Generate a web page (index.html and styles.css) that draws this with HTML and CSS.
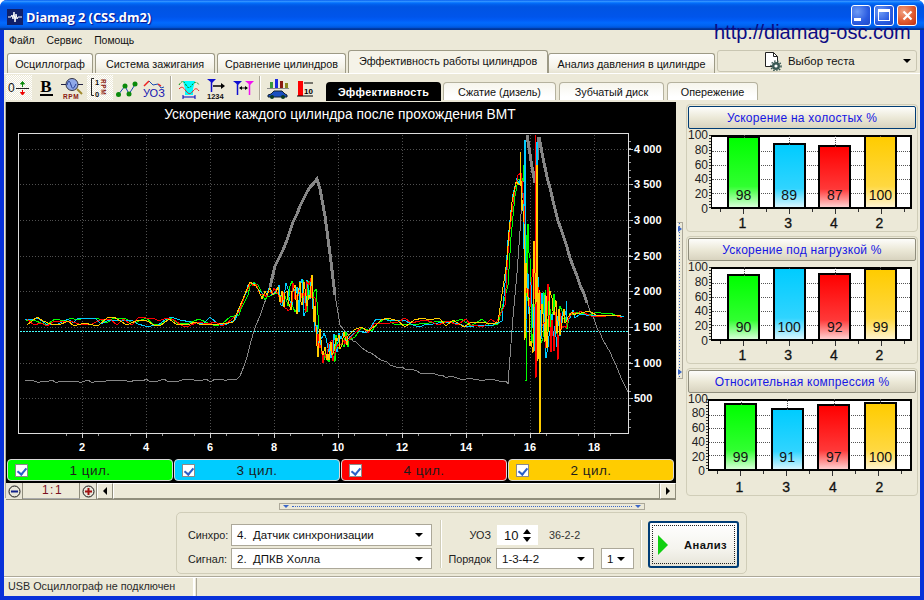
FILE: index.html
```html
<!DOCTYPE HTML>
<html lang="ru">
<head>
<meta charset="UTF-8">
<title>Diamag 2 (CSS.dm2)</title>
<link rel="stylesheet" href="styles.css">
</head>
<body>
<div class="window">

  <div class="titlebar">
    <svg class="appicon" width="16" height="16" viewBox="0 0 16 16"><rect width="16" height="16" fill="#10206a"/><path d="M1 8h3l1-2 1 4 1-7 1 10 1-8 1 5 1-2h4" fill="none" stroke="#fff"/></svg>
    <span class="apptitle">Diamag 2 (CSS.dm2)</span>
    <div class="winbtns">
      <div class="winbtn"><span class="g-min"></span></div>
      <div class="winbtn"><span class="g-max"></span></div>
      <div class="winbtn close"><svg width="11" height="11" viewBox="0 0 11 11"><path d="M1.5 1.5l8 8M9.5 1.5l-8 8" stroke="#fff" stroke-width="2.2"/></svg></div>
    </div>
  </div>
  <div class="siteurl">http://diamag-osc.com</div>

  <div class="menubar">
    <span>Файл</span>
    <span>Сервис</span>
    <span>Помощь</span>
  </div>

  <div class="tabrow">
    <div class="tab">Осциллограф</div>
    <div class="tab">Система зажигания</div>
    <div class="tab">Сравнение цилиндров</div>
    <div class="tab on">Эффективность работы цилиндров</div>
    <div class="tab">Анализ давления в цилиндре</div>
    <div class="testbtn">
      <svg width="20" height="20" viewBox="0 0 20 20"><path d="M2.5 1.5h8l4 4v10h-12z" fill="#fff" stroke="#222"/><path d="M10.5 1.5v4h4" fill="none" stroke="#222"/><circle cx="13" cy="15" r="4" fill="#3a5a55"/><circle cx="13" cy="15" r="5" fill="none" stroke="#3a5a55" stroke-dasharray="1.5 1.5" stroke-width="1.5"/><circle cx="13" cy="15" r="1.6" fill="#fff"/></svg>
      <span>Выбор теста</span>
      <i class="arrow"></i>
    </div>
  </div>

  <div class="toolbar">
    <div class="tbtn checked"><svg width="24" height="24" viewBox="0 0 24 24"><text x="1" y="16" class="ic-num">0</text><path d="M9 12.5h13" stroke="#222"/><path d="M15.5 11V7M13.5 8l2-2.500 2 2.500z" stroke="#0a8a0a" fill="#0a8a0a"/><path d="M15.5 14v4M13.5 16.5l2 2.500 2-2.500z" stroke="#e00" fill="#e00"/></svg></div>
    <div class="tbtn"><svg width="24" height="24" viewBox="0 0 24 24"><text x="12" y="16" class="ic-b">B</text><path d="M6 19h13" stroke="#000" stroke-width="2"/></svg></div>
    <div class="tbtn"><svg width="24" height="24" viewBox="0 0 24 24"><circle cx="11" cy="8.500" r="6" fill="#8fa8e8" stroke="#334"/><path d="M0 8.500h5M17 8.500h5" stroke="#224"/><path d="M6 9c1.500-5 2.500-5 4 0s2.500 4 5-1" fill="none" stroke="#223a90"/><path d="M16 13l5 5" stroke="#a08a30" stroke-width="2"/><text x="2" y="23" class="ic-rpm">RPM</text></svg></div>
    <div class="tbtn checked"><svg width="24" height="24" viewBox="0 0 24 24"><path d="M6 2.500h-2.500v17h2.500" fill="none" stroke="#222"/><text x="7" y="9" class="ic-tiny">1</text><text x="7" y="21" class="ic-tiny">0</text><text transform="translate(13 3) rotate(90)" class="ic-rpm2">RPM</text></svg></div>
    <div class="tbtn"><svg width="24" height="24" viewBox="0 0 24 24"><path d="M3 19l7-9 4 8 7-11" fill="none" stroke="#1a4ab0"/><g fill="#0a8a0a"><circle cx="3.500" cy="18.500" r="2.500"/><circle cx="10" cy="10" r="2.500"/><circle cx="14" cy="18" r="2.500"/><circle cx="20" cy="8" r="2.500"/></g></svg></div>
    <div class="tbtn"><svg width="24" height="24" viewBox="0 0 24 24"><path d="M2 10l5-5 4 4 5-1 3 4 3-1" fill="none" stroke="#1a4ab0"/><path d="M2 10l5-5M16 8l3 2" fill="none" stroke="#e22" stroke-width="1.500"/><text x="1" y="21" class="ic-uoz">УОЗ</text></svg></div>
    <div class="tsep"></div>
    <div class="tbtn"><svg width="24" height="24" viewBox="0 0 24 24"><path d="M6 5h12l-2 8v6h-8v-6z" fill="#0ff"/><path d="M2 9c3-5 5-4 7 0s4 3 6 0 5-4 7 0" fill="none" stroke="#0a8a0a" stroke-dasharray="2 1"/><path d="M2 13c3-3 4-2 7 2s5 3 7 0 4-3 6 0" fill="none" stroke="#e22"/><path d="M6 21h12M6 19v4M18 19v4" stroke="#0000c0"/></svg></div>
    <div class="tbtn"><svg width="24" height="24" viewBox="0 0 24 24"><path d="M3 3h9l-4 4z" fill="#1010d0"/><path d="M7.500 5v11" stroke="#1010d0" stroke-width="1.500"/><path d="M9 10h10" stroke="#000" stroke-width="1.500"/><path d="M17 7l4 3-4 3z"/><text x="3" y="23" class="ic-tiny">1234</text></svg></div>
    <div class="tbtn"><svg width="24" height="24" viewBox="0 0 24 24"><path d="M2 5h9l-4 4z" fill="#1010d0"/><path d="M6.500 7v12" stroke="#1010d0" stroke-width="1.500"/><path d="M14 5h9l-4 4z" fill="#f010f0"/><path d="M18.500 7v12" stroke="#f010f0" stroke-width="1.500"/><path d="M9 12h7" stroke="#000"/><path d="M11 10l-3 2 3 2zM14 10l3 2-3 2z"/></svg></div>
    <div class="tsep"></div>
    <div class="tbtn"><svg width="24" height="24" viewBox="0 0 24 24"><path d="M4 6h3v6h-3z" fill="#3a9a3a"/><path d="M9 3h3v9h-3z" fill="#1a2ae0"/><path d="M14 5h3v7h-3z" fill="#8a1a10"/><path d="M19 7h3v5h-3z" fill="#8a8a20"/><path d="M1 12.500h22" stroke="#888"/><path d="M2 19l3-1 3-3h8l3 3 2 1v2h-19z" fill="#1a50c0" stroke="#123"/><circle cx="6" cy="21" r="2" fill="#0a3a20"/><circle cx="17" cy="21" r="2" fill="#0a3a20"/></svg></div>
    <div class="tbtn"><svg width="24" height="24" viewBox="0 0 24 24"><path d="M5 5h5v15h-5z" fill="#f00"/><path d="M11 7h9M4 20h16" stroke="#000"/><text x="11" y="18" class="ic-ten">10</text></svg></div>

    <div class="subtabs">
      <div class="subtab on">Эффективность</div>
      <div class="subtab">Сжатие (дизель)</div>
      <div class="subtab">Зубчатый диск</div>
      <div class="subtab">Опережение</div>
    </div>
  </div>

  <div class="work">
    <div class="scope">
      <svg class="scopeplot" width="668" height="357" viewBox="6 102 668 357">
        <text x="340" y="119" class="plottitle">Ускорение каждого цилиндра после прохождения ВМТ</text>
        <g id="grid"></g>
        <g id="traces"></g>
        <g class="ylab">
          <text x="634" y="153">4 000</text>
          <text x="634" y="188">3 500</text>
          <text x="634" y="224">3 000</text>
          <text x="634" y="260">2 500</text>
          <text x="634" y="295">2 000</text>
          <text x="634" y="331">1 500</text>
          <text x="634" y="367">1 000</text>
          <text x="634" y="402">500</text>
        </g>
        <g class="xlab">
          <text x="82" y="451">2</text>
          <text x="146" y="451">4</text>
          <text x="210" y="451">6</text>
          <text x="274" y="451">8</text>
          <text x="338" y="451">10</text>
          <text x="402" y="451">12</text>
          <text x="466" y="451">14</text>
          <text x="530" y="451">16</text>
          <text x="594" y="451">18</text>
        </g>
      </svg>
      <div class="chips">
        <label class="chip green"><i class="check"></i><span>1 цил.</span></label>
        <label class="chip cyan"><i class="check"></i><span>3 цил.</span></label>
        <label class="chip red"><i class="check"></i><span>4 цил.</span></label>
        <label class="chip amber"><i class="check"></i><span>2 цил.</span></label>
      </div>
      <div class="zoombar">
        <div class="zbtn"><svg width="13" height="13" viewBox="0 0 13 13"><circle cx="6.500" cy="6.500" r="5.500" fill="#e8e6da" stroke="#111"/><path d="M3 6.500h7" stroke="#10208a" stroke-width="2"/></svg></div>
        <div class="zoomval">1:1</div>
        <div class="zbtn"><svg width="13" height="13" viewBox="0 0 13 13"><circle cx="6.500" cy="6.500" r="5.500" fill="#e8e6da" stroke="#111"/><path d="M3 6.500h7M6.500 3v7" stroke="#a01010" stroke-width="2"/></svg></div>
        <div class="scrollbtn"><i class="tri-l"></i></div>
        <div class="scrollthumb"></div>
        <div class="scrollbtn"><i class="tri-r"></i></div>
      </div>
    </div>

    <div class="vsplit"><div class="vgrip"><i class="grip-t"></i><i class="grip-b"></i></div></div>

    <div class="side">
      <div class="group">
        <div class="ghead focus">Ускорение на холостых %</div>
        <div class="chart">
          <div class="yaxis"><span>100</span><span>80</span><span>60</span><span>40</span><span>20</span><span>0</span></div>
          <div class="plot">
            <div class="gridrows"><b></b><b></b><b></b><b></b><b></b></div>
            <div class="bars">
              <div class="bar green" style="height:98%"><span>98</span></div>
              <div class="bar cyan" style="height:89%"><span>89</span></div>
              <div class="bar red" style="height:87%"><span>87</span></div>
              <div class="bar amber" style="height:100%"><span>100</span></div>
            </div>
          </div>
        </div>
        <div class="xaxis"><span>1</span><span>3</span><span>4</span><span>2</span></div>
      </div>

      <div class="group">
        <div class="ghead">Ускорение под нагрузкой %</div>
        <div class="chart">
          <div class="yaxis"><span>100</span><span>80</span><span>60</span><span>40</span><span>20</span><span>0</span></div>
          <div class="plot">
            <div class="gridrows"><b></b><b></b><b></b><b></b><b></b></div>
            <div class="bars">
              <div class="bar green" style="height:90%"><span>90</span></div>
              <div class="bar cyan" style="height:100%"><span>100</span></div>
              <div class="bar red" style="height:92%"><span>92</span></div>
              <div class="bar amber" style="height:99%"><span>99</span></div>
            </div>
          </div>
        </div>
        <div class="xaxis"><span>1</span><span>3</span><span>4</span><span>2</span></div>
      </div>

      <div class="group wide">
        <div class="ghead">Относительная компрессия %</div>
        <div class="chart">
          <div class="yaxis"><span>100</span><span>80</span><span>60</span><span>40</span><span>20</span><span>0</span></div>
          <div class="plot">
            <div class="gridrows"><b></b><b></b><b></b><b></b><b></b></div>
            <div class="bars">
              <div class="bar green" style="height:99%"><span>99</span></div>
              <div class="bar cyan" style="height:91%"><span>91</span></div>
              <div class="bar red" style="height:97%"><span>97</span></div>
              <div class="bar amber" style="height:100%"><span>100</span></div>
            </div>
          </div>
        </div>
        <div class="xaxis"><span>1</span><span>3</span><span>4</span><span>2</span></div>
      </div>
    </div>
  </div>

  <div class="lower">
    <div class="hgrip"><i class="grip-l"></i><i class="grip-line"></i><i class="grip-l"></i></div>
    <div class="panel">
      <div class="pcol first">
        <div class="prow"><label>Синхро:</label><div class="combo wide1"><span>4.&nbsp; Датчик синхронизации</span><i class="arrow"></i></div></div>
        <div class="prow"><label>Сигнал:</label><div class="combo wide1"><span>2.&nbsp; ДПКВ Холла</span><i class="arrow"></i></div></div>
      </div>
      <div class="psep"></div>
      <div class="pcol second">
        <div class="prow">
          <label class="rt">УОЗ</label>
          <div class="spin"><span>10</span><div class="spinarrows"><i class="up"></i><i class="down"></i></div></div>
          <span class="gear">36-2-2</span>
        </div>
        <div class="prow">
          <label class="rt">Порядок</label>
          <div class="combo order"><span>1-3-4-2</span><i class="arrow"></i></div>
          <div class="combo first-cyl"><span>1</span><i class="arrow"></i></div>
        </div>
      </div>
      <div class="psep two"></div>
      <div class="runbtn"><div class="runinner"><i class="play"></i><span>Анализ</span></div></div>
    </div>
  </div>

  <div class="statusbar">
    <div class="stcell">USB Осциллограф не подключен</div>
    <div class="stcell rest"></div>
  </div>
</div>
<script src="chart.js"></script>
</body>
</html>
```

FILE: styles.css
```css
* { margin: 0; padding: 0; box-sizing: border-box; }
html, body { width: 924px; height: 600px; overflow: hidden; background: #fff; }
body {
  font-family: "Liberation Sans", Arial, sans-serif;
  font-size: 10.8px;
  color: #111;
}
i { display: block; font-style: normal; }

.window {
  position: relative;
  width: 924px;
  height: 600px;
  display: flex;
  flex-direction: column;
  background: #ece9d8;
  border: solid #0831d9;
  border-width: 0 4px 4px;
  border-radius: 7px 7px 0 0;
}

/* title bar */
.titlebar {
  flex: none;
  height: 30px;
  margin: 0 -4px;
  padding: 3px 7px 0 7px;
  display: flex;
  align-items: center;
  border-radius: 7px 7px 0 0;
  background: linear-gradient(#0058ee 0%, #3593ff 4%, #288eff 6%, #127dff 8%, #036ffc 10%, #0262ee 14%, #0057e5 20%, #0054e3 24%, #0055eb 56%, #005bf5 66%, #026afe 76%, #0062ef 86%, #0052d6 92%, #0040ab 94%, #003092 100%);
}
.appicon { flex: none; margin-right: 3px; }
.apptitle {
  font-family: "Open Sans", "Liberation Sans", sans-serif;
  font-weight: 700;
  font-size: 12.8px;
  color: #fff;
  text-shadow: 1px 1px 1px #0f1089;
}
.winbtns { margin-left: auto; margin-top: -3px; display: flex; gap: 3px; }
.winbtn {
  width: 20px;
  height: 21px;
  border: 1px solid #fff;
  border-radius: 3px;
  background: radial-gradient(circle at 30% 30%, #6f9cf5, #2a5be0 60%, #2048c8);
  display: flex;
  align-items: center;
  justify-content: center;
  position: relative;
}
.winbtn.close { background: radial-gradient(circle at 30% 30%, #f0a080, #e05a30 55%, #c03010); }
.g-min { width: 7px; height: 3px; background: #fff; margin: 9px 8px 0 0; }
.g-max { width: 12px; height: 12px; border: 1px solid #fff; border-top-width: 3px; }

.siteurl {
  position: absolute;
  top: 21px;
  left: 710px;
  font-size: 20px;
  color: #0c0c84;
  white-space: nowrap;
}

/* menu */
.menubar {
  flex: none;
  height: 20px;
  display: flex;
  align-items: center;
  gap: 12px;
  padding-left: 5px;
  font-size: 10.4px;
}

/* main tabs */
.tabrow {
  flex: none;
  height: 24px;
  display: grid;
  grid-template-columns: 88px 122px 131px 200px 169px 200px;
  padding-left: 3px;
  align-items: end;
  border-bottom: 1px solid #fff;
}
.tab {
  height: 20px;
  margin-right: 2px;
  display: flex;
  align-items: center;
  justify-content: center;
  white-space: nowrap;
  background: linear-gradient(#fff, #f4f2e8 70%, #e6e3d2);
  border: 1px solid #9d9a86;
  border-bottom: 0;
  border-radius: 3px 3px 0 0;
}
.tab.on { height: 23px; margin: 0; background: #f5f3e8; padding-bottom: 2px; }
.testbtn {
  height: 22px;
  margin-bottom: 1px;
  display: flex;
  align-items: center;
  padding-left: 45px;
  gap: 5px;
  border: 1px solid #c9c6b2;
  border-radius: 3px;
  background: #ece9d8;
  font-size: 11.4px;
}
.testbtn .arrow { margin-left: auto; margin-right: 5px; }
.arrow {
  width: 0;
  height: 0;
  border-left: 4px solid transparent;
  border-right: 4px solid transparent;
  border-top: 4px solid #000;
}

/* toolbar + sub tabs */
.toolbar {
  flex: none;
  height: 27px;
  display: flex;
  align-items: center;
  padding-left: 2px;
  gap: 1px;
}
.tbtn { width: 26px; height: 25px; display: flex; align-items: center; justify-content: center; flex: none; }
.tbtn.checked { background: repeating-conic-gradient(#fff 0 25%, #ece9d8 0 50%) 0 0 / 2px 2px; }
.tsep { width: 2px; height: 24px; margin: 0 3px 0 2px; background: #aca899; border-right: 1px solid #fff; flex: none; }
.ic-num { font-size: 12px; fill: #111; }
.ic-b { font: bold 17px "Liberation Serif", serif; text-anchor: middle; fill: #000; }
.ic-rpm { font: bold 6.5px "Liberation Sans", sans-serif; fill: #8a1a10; letter-spacing: .6px; }
.ic-rpm2 { font: bold 6.5px "Liberation Sans", sans-serif; fill: #8a1a10; letter-spacing: .6px; }
.ic-tiny { font: bold 7.5px "Liberation Sans", sans-serif; fill: #111; }
.ic-uoz { font: 11px "Liberation Sans", sans-serif; fill: #1414b0; }
.ic-ten { font: bold 8px "Liberation Sans", sans-serif; fill: #000; }

.subtabs {
  margin-left: 7px;
  align-self: flex-end;
  display: grid;
  grid-template-columns: 117px 116px 108px 94px;
}
.subtab {
  height: 18px;
  margin-right: 3px;
  display: flex;
  align-items: center;
  justify-content: center;
  border: 1px solid #b5b29e;
  border-bottom: 0;
  border-radius: 4px 4px 0 0;
  background: linear-gradient(#f6f5ec, #fff 80%);
}
.subtab.on {
  height: 19px;
  margin-right: 2px;
  background: #000;
  color: #fff;
  font-weight: 700;
  border: 0;
  letter-spacing: .3px;
}

/* work area */
.work { flex: none; height: 399px; display: flex; }
.scope {
  flex: none;
  width: 671px;
  margin: 1px 0 2px 1px;
  display: flex;
  flex-direction: column;
  background: #000;
  border: 1px solid #aca899;
  border-width: 0 0 1px 1px;
}
.scopeplot { display: block; flex: none; }
.plottitle { font-size: 13.8px; fill: #fff; text-anchor: middle; }
.ylab text { font-size: 11px; font-weight: 700; fill: #fff; }
.xlab text { font-size: 11px; font-weight: 700; fill: #fff; text-anchor: middle; }

.chips {
  flex: none;
  height: 24px;
  display: grid;
  grid-template-columns: repeat(4, 166px);
  gap: 1px;
  padding: 0 0 2px 1px;
}
.chip {
  display: flex;
  align-items: center;
  border: 1px solid #d8d8d8;
  border-radius: 4px;
  padding-left: 7px;
  font-size: 13.5px;
  letter-spacing: .5px;
  color: #1c1c1c;
}
.chip span { flex: 1; text-align: center; padding-right: 20px; }
.chip.green { background: #00ff00; }
.chip.cyan { background: #00ccff; }
.chip.red { background: #ff0000; }
.chip.amber { background: #ffcc00; }
.check {
  flex: none;
  width: 13px;
  height: 13px;
  border: 1px solid #8a8a8a;
  background: #fff;
  position: relative;
}
.check::after {
  content: "";
  position: absolute;
  left: 3px;
  top: 1px;
  width: 4px;
  height: 7px;
  border: solid #2a5fc8;
  border-width: 0 2px 2px 0;
  transform: rotate(40deg);
}

.zoombar {
  flex: 1;
  display: flex;
  align-items: stretch;
  background: #ece9d8;
  border-bottom: 1px solid #8f8d7c;
}
.zbtn { flex: none; width: 17px; display: flex; align-items: center; justify-content: center; background: #e8e5d6; border-right: 1px solid #8f8d7c; }
.zoomval { flex: none; width: 57px; padding-left: 3px; text-align: center; color: #7a1020; font-size: 12px; letter-spacing: 1.5px; line-height: 15px; border-right: 1px solid #8f8d7c; border-bottom: 1px solid #aaa; }
.scrollbtn { flex: none; width: 16px; display: flex; align-items: center; justify-content: center; background: #ece9d8; border: 1px solid; border-color: #fff #8f8d7c #8f8d7c #fff; }
.scrollthumb { flex: 1; background: #ece9d8; border: 1px solid; border-color: #fff #8f8d7c #8f8d7c #fff; }
.tri-l { border: 4px solid transparent; border-left: 0; border-right: 4px solid #000; }
.tri-r { border: 4px solid transparent; border-right: 0; border-left: 4px solid #000; }

.vsplit { flex: none; width: 8px; padding: 121px 0 0 1px; }
.vgrip {
  width: 6px;
  height: 157px;
  border: 1px solid #aca899;
  border-left-color: #fff;
  display: flex;
  flex-direction: column;
  justify-content: space-between;
  padding: 3px 0;
  background: repeating-linear-gradient(#3a66c8 0 1px, transparent 1px 3px) 1px 0 / 1px 100% no-repeat;
}
.grip-t { border: 3px solid transparent; border-right: 0; border-left: 4px solid #3a66c8; }
.grip-b { border: 3px solid transparent; border-right: 0; border-left: 4px solid #3a66c8; }

/* bar charts */
.side { flex: none; width: 237px; padding: 3px 0 0 2px; display: flex; flex-direction: column; gap: 4px; }
.group {
  height: 128px;
  width: 232px;
  border: 1px solid #d0cdb8;
  border-radius: 4px;
  padding: 1px 2px 0 1px;
}
.ghead {
  height: 23px;
  display: flex;
  align-items: center;
  justify-content: center;
  border: 1px solid #8f8d7c;
  border-radius: 2px;
  background: linear-gradient(#fdfdfb, #ece9d8 50%, #d8d3bf);
  color: #1616e4;
  font-size: 12px;
  letter-spacing: .25px;
  width: 228px;
}
.ghead.focus { border-color: #003c74; }
.chart { display: flex; margin-top: 6px; height: 74px; }
.yaxis {
  flex: none;
  width: 23px;
  padding-right: 3px;
  display: flex;
  flex-direction: column;
  justify-content: space-between;
  text-align: right;
  font-size: 12px;
  color: #222;
  background: repeating-linear-gradient(#333 0 1px, transparent 1px 3px) 100% 0 / 2px 100% no-repeat;
}
.yaxis span { display: block; height: 0; line-height: 0; }
.plot {
  position: relative;
  width: 201px;
  height: 100%;
  flex: none;
  overflow: hidden;
  background: #fff;
}
.gridrows {
  position: absolute;
  inset: 0;
  display: grid;
  grid-template-rows: repeat(5, 1fr);
  border: 2px solid #000;
  border-left-width: 1px;
}
.gridrows b { border-top: 1px dotted #555; }
.gridrows b:first-child { border-top: 0; }
.bars {
  position: relative;
  height: 100%;
  display: flex;
  align-items: flex-end;
  justify-content: space-between;
  padding: 0 15px 0 16px;
}
.bar {
  position: relative;
  width: 33px;
  display: flex;
  align-items: flex-end;
  justify-content: center;
  border: 2px solid #000;
  font-size: 14px;
  line-height: 14px;
  color: #111;
  padding-bottom: 5px;
}
.bar::before {
  content: "";
  position: absolute;
  left: 50%;
  bottom: 100%;
  height: 80px;
  border-left: 1px dotted #555;
}
.bar.green { background: linear-gradient(#00ff00, #30ff30 70%, #d8ffd8); }
.bar.cyan { background: linear-gradient(#00ccff, #30d4ff 70%, #d8f6ff); }
.bar.red { background: linear-gradient(#ff0000, #ff3838 70%, #ffd0d0); }
.bar.amber { background: linear-gradient(#ffcc00, #ffd840 70%, #fff4d0); }
.xaxis {
  height: 20px;
  margin-left: 23px;
  width: 201px;
  padding: 7px 16px 0 15px;
  display: flex;
  justify-content: space-between;
  font-size: 14px;
  line-height: 14px;
  color: #111;
  -webkit-text-stroke: .3px #111;
  background:
    repeating-linear-gradient(90deg, #333 0 1px, transparent 1px 46px) 32px 0 / 100% 5px no-repeat,
    repeating-linear-gradient(90deg, #333 0 1px, transparent 1px 23px) 9px 0 / 100% 3px no-repeat;
}
.xaxis span { width: 33px; text-align: center; }
.wide .yaxis { width: 20px; }
.wide .plot { width: 204px; padding-top: 3px; }
.wide .xaxis { margin-left: 20px; width: 204px; height: 22px; padding-top: 9px; }
.wide .chart { height: 72px; }

/* lower panel */
.lower { flex: none; height: 76px; }
.hgrip {
  width: 366px;
  height: 7px;
  margin: 3px 0 2px 275px;
  border: 1px solid #aca899;
  display: flex;
  align-items: center;
  padding: 0 3px;
  gap: 3px;
}
.grip-l { border: 3px solid transparent; border-bottom: 0; border-top: 3px solid #3a66c8; }
.grip-line { flex: 1; border-top: 1px dotted #3a66c8; }
.panel {
  width: 571px;
  height: 62px;
  margin-left: 172px;
  border: 1px solid #d0cdb8;
  border-radius: 5px;
  padding: 11px 0 0 11px;
  display: flex;
}
.pcol { display: flex; flex-direction: column; gap: 2px; }
.prow { display: flex; align-items: center; height: 22px; }
.prow:last-child { height: 21px; }
.prow label { width: 43px; flex: none; color: #222; }
.prow label.rt { text-align: right; }
.psep { flex: none; width: 2px; height: 48px; margin: -4px 6px 0 8px; background: #d0cdb8; border-right: 1px solid #fff; }
.psep.two { margin: -4px 6px 0 6px; }
.combo {
  display: flex;
  align-items: center;
  height: 100%;
  padding: 0 8px 0 5px;
  background: #fff;
  border: 1px solid #aca899;
  font-size: 11.5px;
}
.combo .arrow { margin-left: auto; }
.wide1 { width: 201px; }
.second { width: 186px; }
.order { width: 98px; margin-left: 5px; }
.first-cyl { width: 33px; margin-left: 7px; }
.spin {
  width: 41px;
  height: 20px;
  margin-left: 6px;
  display: flex;
  align-items: center;
  padding-left: 6px;
  background: #fff;
  border: 1px solid #fff;
  font-size: 13px;
}
.spinarrows { margin-left: auto; margin-right: 6px; display: flex; flex-direction: column; gap: 3px; }
.spinarrows .up { border: 4px solid transparent; border-top: 0; border-bottom: 5px solid #000; }
.spinarrows .down { border: 4px solid transparent; border-bottom: 0; border-top: 5px solid #000; }
.gear { margin-left: 11px; color: #333; }
.runbtn {
  flex: none;
  width: 91px;
  height: 47px;
  margin-top: -3px;
  padding: 2px;
  border: 2px solid #003c74;
  border-radius: 3px;
  background: linear-gradient(#fff, #f5f4ee 60%, #e6e4d8);
}
.runinner {
  height: 100%;
  border: 1px dotted #222;
  display: flex;
  align-items: center;
  padding-left: 5px;
}
.play { flex: none; border: 10px solid transparent; border-right: 0; border-left: 10px solid #10d010; }
.runinner span { margin-left: 16px; font-weight: 700; font-size: 11.2px; letter-spacing: .4px; }

/* status */
.statusbar {
  flex: 1;
  display: flex;
  border-top: 1px solid #aca899;
  padding-top: 1px;
  box-shadow: inset 0 1px 0 #fff;
}
.stcell { width: 191px; padding-left: 4px; line-height: 16px; color: #2a2a2a; border-right: 2px solid #fff; }
.stcell.rest { flex: 1; border-left: 1px solid #aca899; border-right: 0; margin-left: 1px; }
```

FILE: chart.js
```js
var NS = "http://www.w3.org/2000/svg",
    grid = document.getElementById("grid"),
    traces = document.getElementById("traces"),
    gridYs = [149, 184, 220, 256, 291, 327, 363, 398],
    i;

function add(parent, name, attrs) {
  var el = document.createElementNS(NS, name);
  for (var k in attrs) { el.setAttribute(k, attrs[k]); }
  el.setAttribute("shape-rendering", "crispEdges");
  parent.appendChild(el);
  return el;
}

function line(x1, y1, x2, y2, col, dash) {
  var a = { x1: x1 + .5, y1: y1 + .5, x2: x2 + .5, y2: y2 + .5, stroke: col };
  if (dash) { a["stroke-dasharray"] = dash; }
  add(grid, "line", a);
}

// grid and ticks
for (i = 0; i < gridYs.length; i++) {
  line(19, gridYs[i], 627, gridYs[i], "#505050", "1 2");
  line(628, gridYs[i], 632, gridYs[i], "#ccc");
}
for (i = 141; i < 433; i += 7.14) {
  line(628, Math.round(i), 630, Math.round(i), "#999");
}
for (i = 82; i < 628; i += 64) {
  line(i, 134, i, 432, "#505050", "1 2");
  line(i, 433, i, 437, "#ccc");
  line(i - 16, 433, i - 16, 435, "#999");
  line(i + 16, 433, i + 16, 435, "#999");
}
add(grid, "rect", { x: 18.5, y: 133.5, width: 610, height: 300, fill: "none", stroke: "#ddd" });
line(19, 331, 627, 331, "#4ff", "2 1");

// seeded so the picture is the same every time
var seed = 73;
function rnd() {
  seed = (seed * 16807) % 2147483647;
  return seed / 2147483647;
}

function pts(list) {
  return list.map(function (p) { return p[0] + "," + p[1]; }).join(" ");
}

// break a curve up into short jittered pieces
function rough(list, j) {
  var out = [], a, b, n, k;
  for (var s = 0; s < list.length - 1; s++) {
    a = list[s];
    b = list[s + 1];
    n = Math.max(1, Math.floor(Math.abs(b[0] - a[0]) / 3));
    for (k = 0; k < n; k++) {
      out.push([
        Math.round(a[0] + (b[0] - a[0]) * k / n),
        Math.round(a[1] + (b[1] - a[1]) * k / n + (rnd() - .5) * j)
      ]);
    }
  }
  out.push(list[list.length - 1]);
  return out;
}

// gray speed curve: [width, jitter, points]
var gray = [
  [1, 3, [[25, 381], [233, 380]]],
  [1, 2, [[233, 380], [240, 377], [247, 357], [253, 333], [263, 307], [270, 287]]],
  [3, 2, [[270, 287], [275, 267], [283, 250], [290, 230], [300, 205], [310, 187], [317, 179], [320, 190], [325, 215], [330, 255], [335, 295]]],
  [1, 2, [[335, 295], [340, 325], [350, 338], [365, 350], [390, 365], [420, 372], [460, 378], [495, 380], [506, 382], [508, 385], [513, 317], [520, 230], [525, 150], [527, 135]]],
  [3, 2, [[527, 135], [532, 167], [535, 183], [539, 138], [547, 177], [558, 220], [570, 257], [587, 303]]],
  [1, 2, [[587, 303], [597, 327], [613, 360], [628, 392]]]
];
gray.forEach(function (g) {
  add(traces, "polyline", { points: pts(rough(g[2], g[1])), fill: "none", stroke: "#868686", "stroke-width": g[0] });
});

// colored cylinder traces: x, y, noise
var shape = [
  [25, 322, 5], [232, 322, 5], [236, 318, 2], [250, 283, 1.5], [258, 286, 2], [263, 296, 5], [270, 291, 5], [276, 292, 6],
  [285, 296, 14], [300, 298, 18], [313, 295, 22], [316, 320, 14], [319, 345, 20], [330, 350, 15], [342, 342, 10], [350, 338, 7],
  [365, 330, 5], [378, 323, 5], [500, 322, 5], [504, 318, 2], [507, 263, 3], [513, 197, 4], [517, 182, 6], [522, 180, 10],
  [524, 220, 25], [527, 300, 60], [536, 300, 70], [542, 320, 45], [552, 325, 35], [560, 325, 18], [570, 315, 6], [580, 313, 4],
  [600, 314, 2], [623, 317, 1]
];

function at(x) {
  for (var j = 1; j < shape.length; j++) {
    if (x <= shape[j][0]) {
      var a = shape[j - 1], b = shape[j], t = (x - a[0]) / (b[0] - a[0]);
      return [a[1] + (b[1] - a[1]) * t, a[2] + (b[2] - a[2]) * t];
    }
  }
  return [317, 1];
}

var series = [
  { col: "#00ff00", dx: 2, spikes: [[525, 270], [526, 381], [545, 290], [547, 352], [523, 165]] },
  { col: "#00ccff", dx: -1, spikes: [[525, 140], [526, 320], [537, 142], [538, 352], [566, 301]] },
  { col: "#ff0000", dx: 0, spikes: [[535, 135], [536, 378], [558, 360], [534, 300]] },
  { col: "#ffcc00", dx: -.5, spikes: [[520, 152], [521, 210], [525, 340], [539, 290], [540, 433], [537, 165]] }
];

series.forEach(function (s) {
  var list = [], x = 25 + rnd() * 2, c, y;
  while (x < 625) {
    c = at(x - s.dx);
    y = c[0] + (rnd() - .5) * 2 * c[1];
    list.push([Math.round(x), Math.round(y)]);
    x += c[1] > 8 ? 1 + rnd() : (x > 236 && x < 320) || (x > 500 && x < 580) ? 2 + rnd() * 2 : 5 + rnd() * 6;
  }
  list = list.concat(s.spikes);
  list.sort(function (a, b) { return a[0] - b[0]; });
  add(traces, "polyline", { points: pts(list), fill: "none", stroke: s.col });
});
```
